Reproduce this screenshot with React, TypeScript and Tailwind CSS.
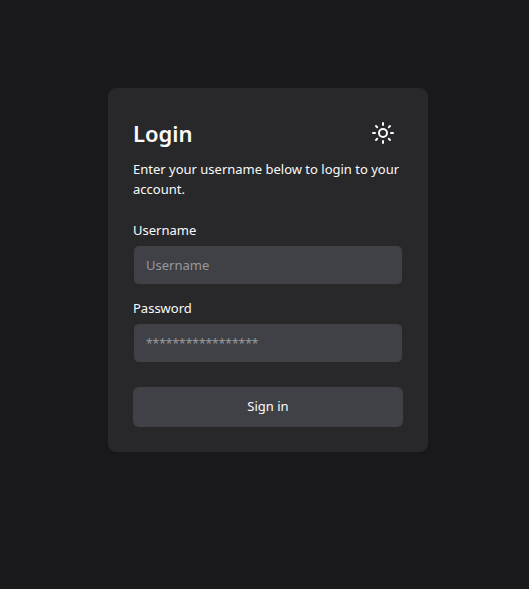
const inputClass =
  "h-10 w-full rounded-md border border-[#28282a] bg-[#404146] px-3 py-2 text-[13px] text-neutral-50 placeholder:text-[#98989d] focus:outline-none";

function SunIcon() {
  return (
    <svg
      width="22"
      height="22"
      viewBox="0 0 22 22"
      fill="none"
      stroke="currentColor"
      strokeWidth="2"
      strokeLinecap="round"
      aria-hidden="true"
    >
      <circle cx="11" cy="11" r="4" />
      <path d="M11 1v2M11 19v2M1 11h2M19 11h2M4 4l1.2 1.2M16.8 16.8L18 18M4 18l1.2-1.2M16.8 5.2L18 4" />
    </svg>
  );
}

export default function App() {
  return (
    <div className="flex min-h-screen items-center justify-center bg-[#19191b] pb-[49px] pl-[7px] font-['Noto_Sans',sans-serif] text-neutral-50">
      <main className="w-full max-w-80 rounded-lg border border-[#28282a] bg-[#28282a]">
        <header className="flex flex-col gap-1.5 p-6">
          <div className="flex items-center justify-between">
            <h1 className="text-[22px] leading-6 font-semibold">Login</h1>
            <button
              type="button"
              aria-label="Toggle theme"
              className="flex size-10 items-center justify-center rounded-md"
            >
              <SunIcon />
            </button>
          </div>
          <p className="text-[13px] leading-5">
            Enter your username below to login to your account.
          </p>
        </header>
        <form className="px-6 pb-6" onSubmit={(e) => e.preventDefault()}>
          <div className="grid gap-4">
            <div className="grid gap-2">
              <label htmlFor="username" className="text-[13px] leading-3.5">
                Username
              </label>
              <input
                id="username"
                type="text"
                placeholder="Username"
                className={inputClass}
              />
            </div>
            <div className="grid gap-2">
              <label htmlFor="password" className="text-[13px] leading-3.5">
                Password
              </label>
              <input
                id="password"
                type="password"
                placeholder="*****************"
                className={`${inputClass} placeholder:text-xs`}
              />
            </div>
          </div>
          <button
            type="submit"
            className="mt-6 h-10 w-full rounded-md bg-[#404146] text-[13px]"
          >
            Sign in
          </button>
        </form>
      </main>
    </div>
  );
}
